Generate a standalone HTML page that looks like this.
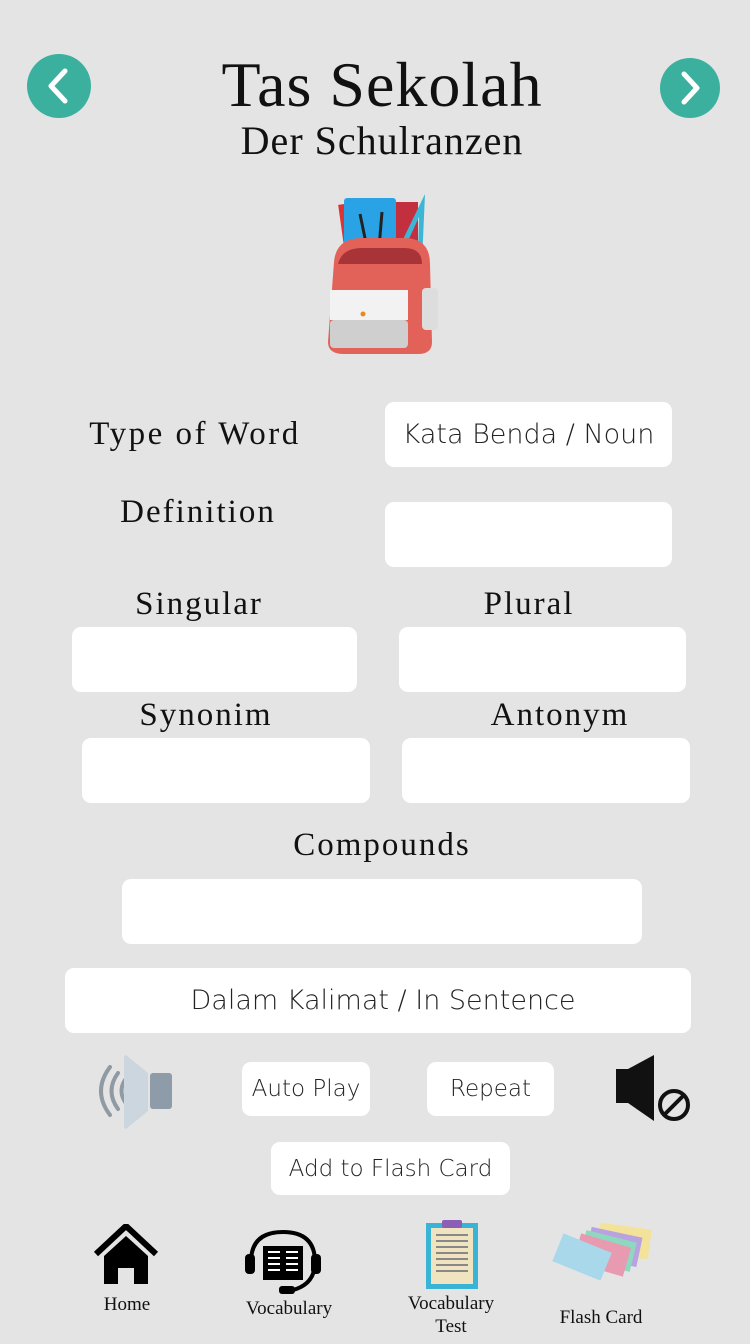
<!DOCTYPE html>
<html><head><meta charset="utf-8"><style>
*{margin:0;padding:0;box-sizing:border-box}
body{width:750px;height:1344px;background:#e4e4e4;position:relative;overflow:hidden;font-family:"Liberation Serif",serif;color:#111}
.a{position:absolute}
.lbl{position:absolute;transform:translateX(-50%);white-space:nowrap;font-size:33px;letter-spacing:2px;line-height:1}
.box{position:absolute;background:#fff;border-radius:9px;font-family:"DejaVu Sans","Liberation Sans",sans-serif;font-weight:300;color:#222;display:flex;align-items:center;justify-content:center;white-space:nowrap}
.nav{position:absolute;transform:translateX(-50%);font-size:19px;text-align:center;line-height:23px;white-space:nowrap}
</style></head><body>
<svg class="a" style="left:27px;top:54px" width="64" height="64"><circle cx="32" cy="32" r="32" fill="#3bb09f"/><path d="M38 17 L24 32 L38 47" stroke="#fff" stroke-width="5" fill="none" stroke-linecap="round" stroke-linejoin="round"/></svg>
<svg class="a" style="left:660px;top:58px" width="60" height="60"><circle cx="30" cy="30" r="30" fill="#3bb09f"/><path d="M24 16 L37 30 L24 44" stroke="#fff" stroke-width="5" fill="none" stroke-linecap="round" stroke-linejoin="round"/></svg>
<div class="lbl" style="left:382px;top:53px;font-size:64px;letter-spacing:1px">Tas Sekolah</div>
<div class="lbl" style="left:382px;top:121px;font-size:40px;letter-spacing:1px">Der Schulranzen</div>
<svg class="a" style="left:322px;top:192px" width="122" height="166">
<rect x="20" y="12" width="8" height="60" fill="#d33" transform="rotate(-8 24 40)"/>
<rect x="26" y="14" width="6" height="60" fill="#7b3"/>
<rect x="22" y="6" width="52" height="80" rx="3" fill="#2aa3e6"/>
<rect x="74" y="10" width="22" height="70" fill="#c23040"/>
<path d="M103 2 L70 70 L100 70 Z M97 25 L80 62 L96 62 Z" fill="#3cb6d4" fill-rule="evenodd"/>
<path d="M38 22 L50 80 M60 20 L55 80" stroke="#222" stroke-width="3"/>
<path d="M12 70 Q14 46 40 46 L82 46 Q108 46 108 72 L110 150 Q110 162 96 162 L22 162 Q6 162 6 150 Z" fill="#e2625a"/>
<path d="M16 72 Q20 56 40 56 L82 56 Q100 56 100 72 Z" fill="#a83438"/>
<rect x="8" y="98" width="78" height="30" fill="#f2f2f2"/>
<rect x="8" y="128" width="78" height="28" rx="4" fill="#cfcfcf"/>
<rect x="100" y="96" width="16" height="42" rx="4" fill="#ddd"/>
<circle cx="41" cy="122" r="2.5" fill="#e68a1c"/>
</svg>
<div class="lbl" style="left:195px;top:418px;letter-spacing:2.5px">Type of Word</div>
<div class="box" style="left:385px;top:402px;width:287px;height:65px;font-size:27px">Kata Benda / Noun</div>
<div class="lbl" style="left:198px;top:496px">Definition</div>
<div class="box" style="left:385px;top:502px;width:287px;height:65px"></div>
<div class="lbl" style="left:199px;top:588px">Singular</div>
<div class="lbl" style="left:529px;top:588px">Plural</div>
<div class="box" style="left:72px;top:627px;width:285px;height:65px"></div>
<div class="box" style="left:399px;top:627px;width:287px;height:65px"></div>
<div class="lbl" style="left:206px;top:699px">Synonim</div>
<div class="lbl" style="left:560px;top:699px">Antonym</div>
<div class="box" style="left:82px;top:738px;width:288px;height:65px"></div>
<div class="box" style="left:402px;top:738px;width:288px;height:65px"></div>
<div class="lbl" style="left:382px;top:829px">Compounds</div>
<div class="box" style="left:122px;top:879px;width:520px;height:65px"></div>
<div class="box" style="left:65px;top:968px;width:626px;height:65px;font-size:27px;padding-left:10px">Dalam Kalimat / In Sentence</div>
<svg class="a" style="left:88px;top:1053px" width="86" height="78">
<path d="M22 14 Q4 38 22 62 M30 20 Q17 38 30 56 M37 27 Q30 38 37 49" stroke="#8f9aa3" stroke-width="4" fill="none" stroke-linecap="round"/>
<path d="M38 2 L60 20 L60 58 L38 76 Q36 76 36 72 L36 6 Q36 2 38 2Z" fill="#ccd6de"/>
<rect x="62" y="20" width="22" height="36" rx="3" fill="#8d9ca8"/>
</svg>
<div class="box" style="left:242px;top:1062px;width:128px;height:54px;font-size:23px">Auto Play</div>
<div class="box" style="left:427px;top:1062px;width:127px;height:54px;font-size:23px">Repeat</div>
<svg class="a" style="left:614px;top:1053px" width="80" height="70">
<rect x="2" y="16" width="12" height="34" fill="#111"/>
<path d="M14 16 L40 2 L40 68 L14 50 Z" fill="#111"/>
<circle cx="60" cy="52" r="14" stroke="#111" stroke-width="4" fill="none"/>
<path d="M51 61 L69 43" stroke="#111" stroke-width="4"/>
</svg>
<div class="box" style="left:271px;top:1142px;width:239px;height:53px;font-size:23px">Add to Flash Card</div>
<svg class="a" style="left:94px;top:1224px" width="64" height="62">
<path d="M2 30 L32 2 L62 30" stroke="#000" stroke-width="6" fill="none"/>
<path d="M10 32 L32 12 L54 32 L54 60 L40 60 L40 44 L24 44 L24 60 L10 60 Z" fill="#000"/>
</svg>
<div class="nav" style="left:127px;top:1293px">Home</div>
<svg class="a" style="left:243px;top:1228px" width="80" height="68">
<path d="M8 34 Q8 4 40 4 Q72 4 72 34 Q72 56 50 62" stroke="#000" stroke-width="4" fill="none"/>
<rect x="2" y="26" width="10" height="20" rx="4" fill="#000"/><rect x="68" y="26" width="10" height="20" rx="4" fill="#000"/>
<rect x="20" y="18" width="40" height="34" fill="#000"/>
<path d="M25 24 h12 M25 30 h12 M25 36 h12 M25 42 h12 M43 24 h12 M43 30 h12 M43 36 h12 M43 42 h12" stroke="#fff" stroke-width="2"/>
<rect x="36" y="58" width="16" height="8" rx="3" fill="#000"/>
</svg>
<div class="nav" style="left:289px;top:1297px">Vocabulary</div>
<svg class="a" style="left:424px;top:1219px" width="56" height="72">
<rect x="2" y="4" width="52" height="66" fill="#3ab4d6"/>
<rect x="7" y="9" width="42" height="56" fill="#efe3c0"/>
<rect x="18" y="1" width="20" height="8" rx="2" fill="#8b5fb5"/>
<path d="M12 16 h32 M12 22 h32 M12 28 h32 M12 34 h32 M12 40 h32 M12 46 h32 M12 52 h32" stroke="#888" stroke-width="2"/>
</svg>
<div class="nav" style="left:451px;top:1292px">Vocabulary<br>Test</div>
<svg class="a" style="left:548px;top:1222px" width="108" height="62">
<rect x="50" y="4" width="52" height="30" fill="#f3e39a" transform="rotate(8 76 19)"/>
<rect x="40" y="10" width="52" height="30" fill="#b8a3e0" transform="rotate(12 66 25)"/>
<rect x="34" y="14" width="52" height="30" fill="#8fd8c0" transform="rotate(14 60 29)"/>
<rect x="28" y="18" width="52" height="30" fill="#e79ab0" transform="rotate(16 54 33)"/>
<rect x="8" y="20" width="52" height="30" fill="#a8d8ea" transform="rotate(22 34 35)"/>
</svg>
<div class="nav" style="left:601px;top:1306px">Flash Card</div>
</body></html>
